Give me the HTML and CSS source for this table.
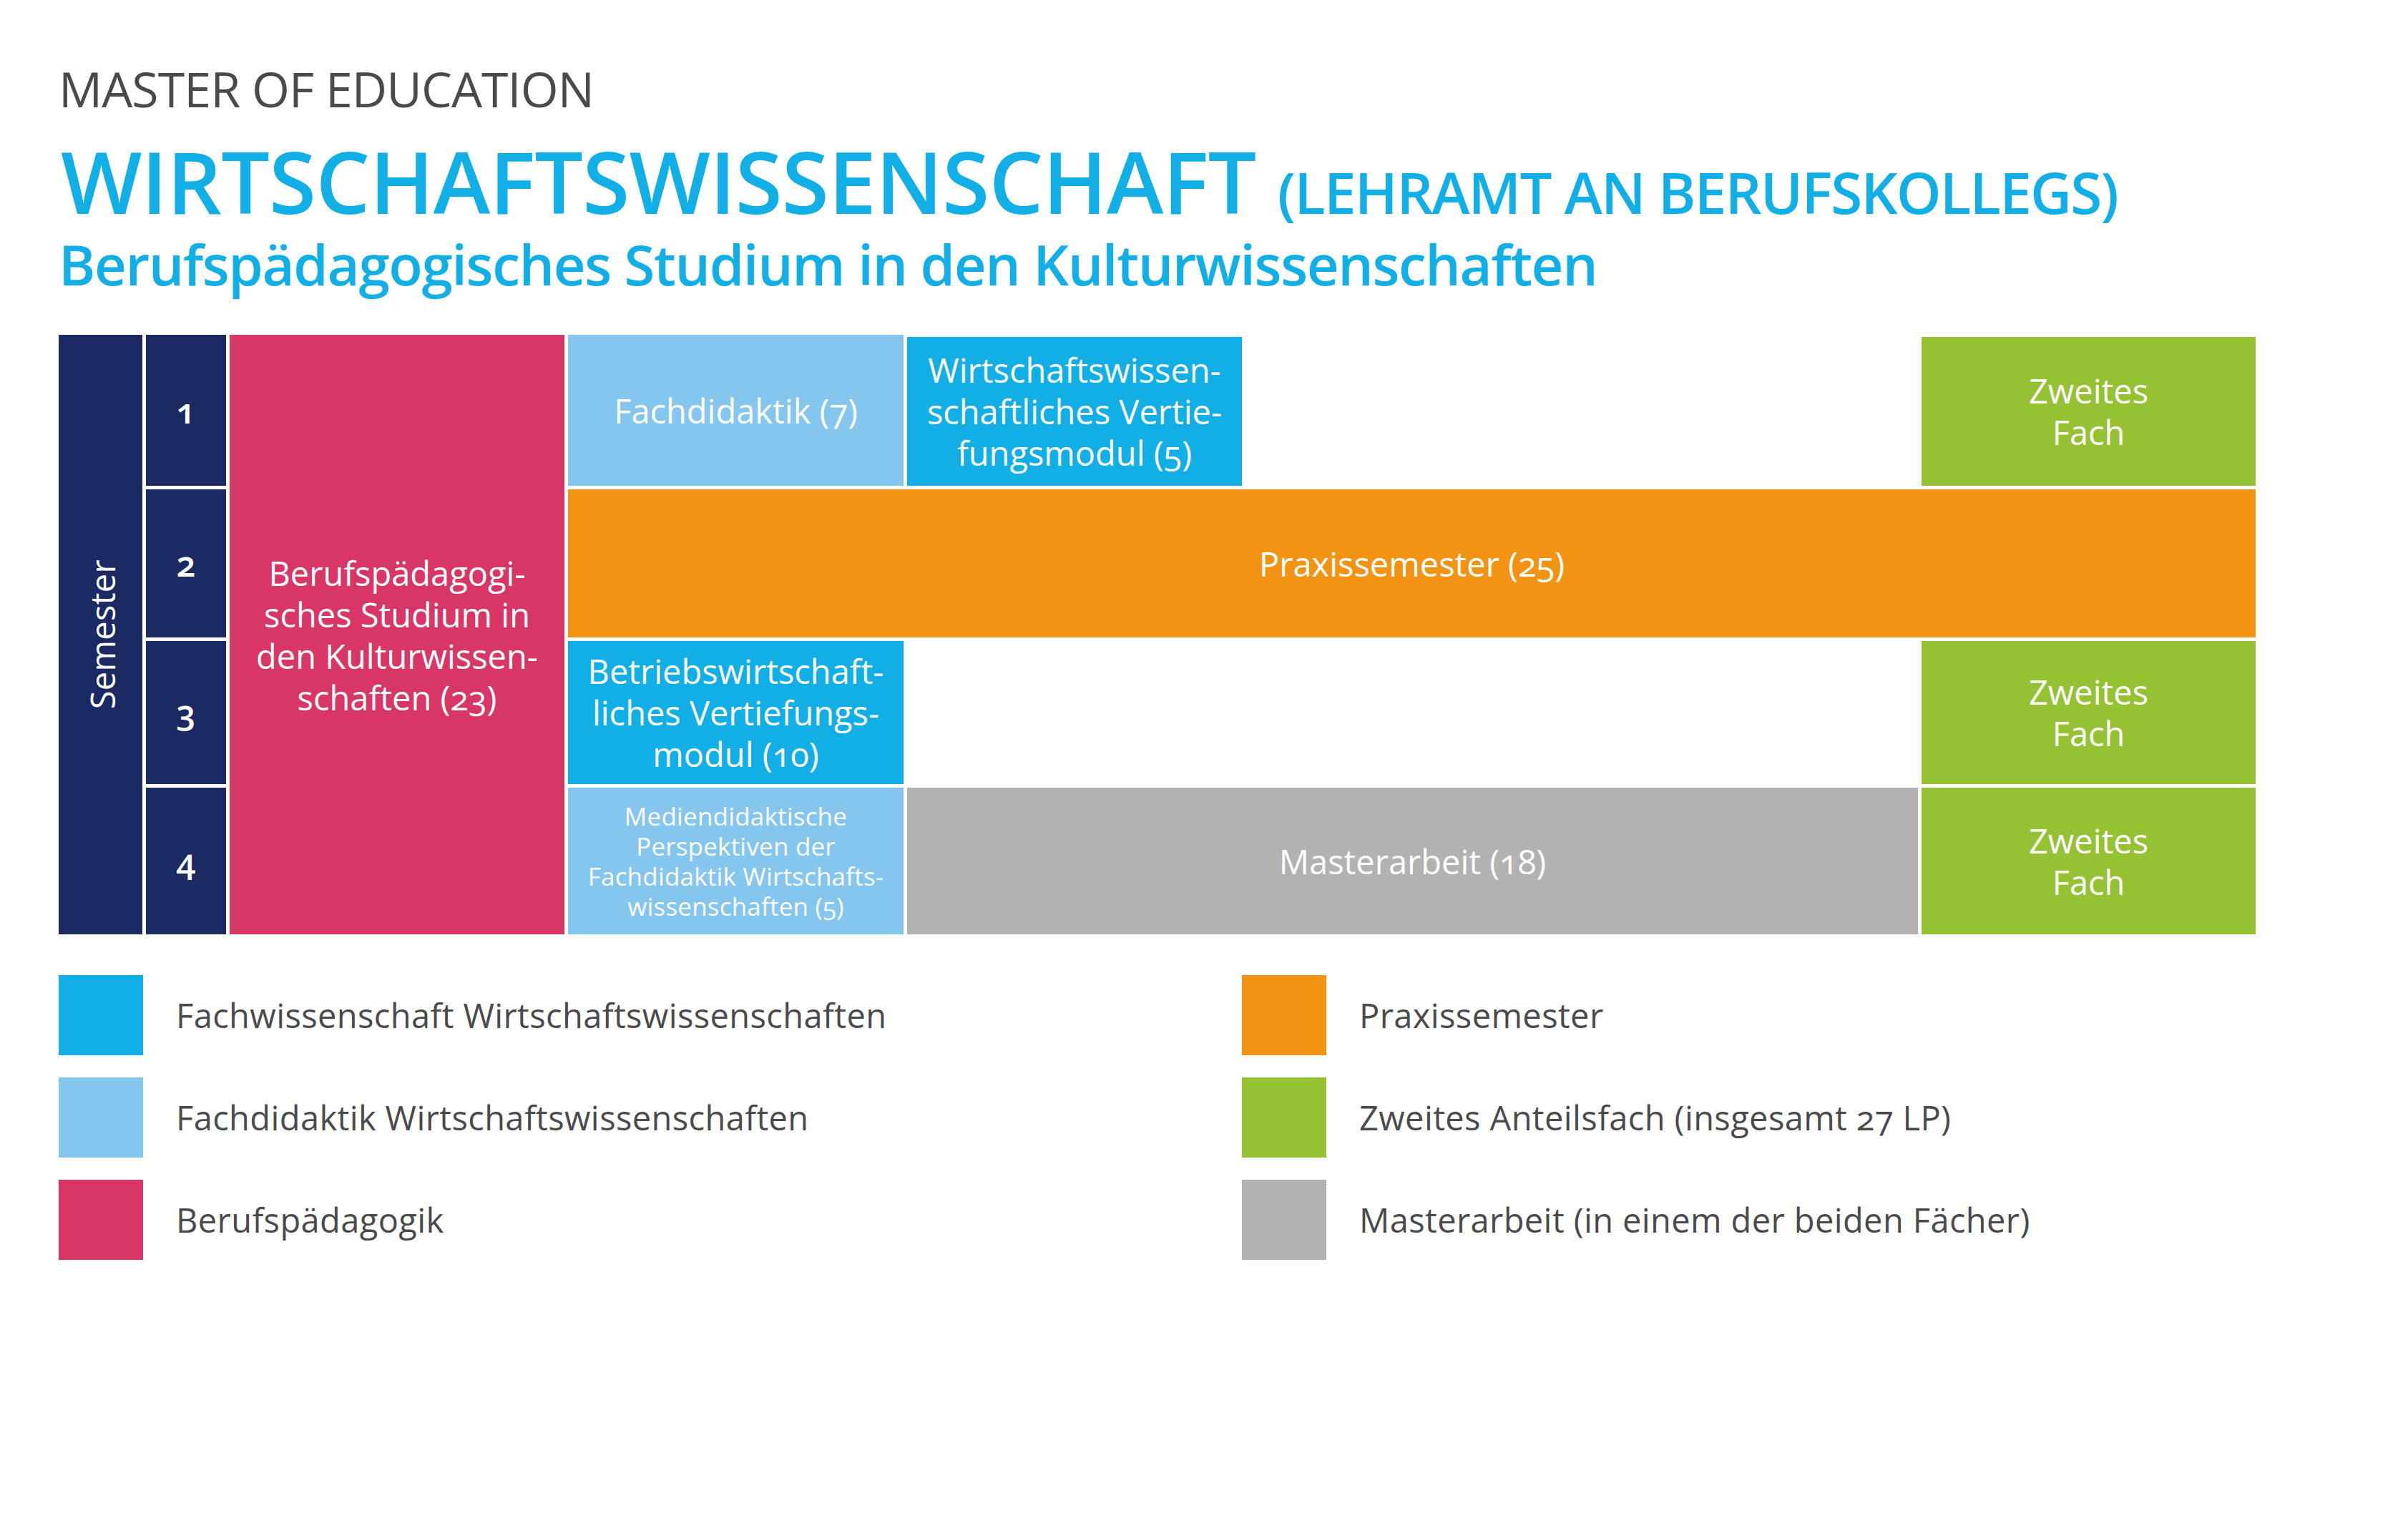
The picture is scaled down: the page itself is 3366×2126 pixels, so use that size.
FILE: index.html
```html
<!DOCTYPE html>
<html lang="de">
<head>
<meta charset="utf-8">
<title>Master of Education – Wirtschaftswissenschaft</title>
<link rel="stylesheet" href="styles.css">
</head>
<body>
<main class="page">
  <header class="head">
    <div class="kicker">MASTER OF EDUCATION</div>
    <h1 class="title">WIRTSCHAFTSWISSENSCHAFT <span class="paren">(LEHRAMT AN BERUFSKOLLEGS)</span></h1>
    <h2 class="subtitle">Berufspädagogisches Studium in den Kulturwissenschaften</h2>
  </header>

  <section class="plan">
    <div class="cell sem"><span class="sem-label">Semester</span></div>
    <div class="cell num r1">1</div>
    <div class="cell num r2">2</div>
    <div class="cell num r3">3</div>
    <div class="cell num r4">4</div>

    <div class="cell pink bp">Berufspädagogi-<br>sches Studium in<br>den Kulturwissen-<br>schaften (23)</div>

    <div class="cell light fd">Fachdidaktik (7)</div>
    <div class="cell blue wv">Wirtschaftswissen-<br>schaftliches Vertie-<br>fungsmodul (5)</div>
    <div class="cell green g1">Zweites<br>Fach</div>

    <div class="cell orange px">Praxissemester (25)</div>

    <div class="cell blue bw">Betriebswirtschaft-<br>liches Vertiefungs-<br>modul (10)</div>
    <div class="cell green g3">Zweites<br>Fach</div>

    <div class="cell light md small">Mediendidaktische<br>Perspektiven der<br>Fachdidaktik Wirtschafts-<br>wissenschaften (5)</div>
    <div class="cell gray ma">Masterarbeit (18)</div>
    <div class="cell green g4">Zweites<br>Fach</div>
  </section>

  <section class="legend">
    <div class="item"><span class="sw blue"></span><span class="lt">Fachwissenschaft Wirtschaftswissenschaften</span></div>
    <div class="item"><span class="sw orange"></span><span class="lt">Praxissemester</span></div>
    <div class="item"><span class="sw light"></span><span class="lt">Fachdidaktik Wirtschaftswissenschaften</span></div>
    <div class="item"><span class="sw green"></span><span class="lt">Zweites Anteilsfach (insgesamt 27 LP)</span></div>
    <div class="item"><span class="sw pink"></span><span class="lt">Berufspädagogik</span></div>
    <div class="item"><span class="sw gray"></span><span class="lt">Masterarbeit (in einem der beiden Fächer)</span></div>
  </section>
</main>
</body>
</html>
```
FILE: styles.css
```css
html, body {
  margin: 0;
  padding: 0;
  background: #ffffff;
}

body {
  width: 3366px;
  height: 2126px;
  overflow: hidden;
  font-family: "Open Sans", "Noto Sans", "DejaVu Sans", sans-serif;
  font-variant-numeric: oldstyle-nums;
  color: #4a4a4a;
}

.page {
  padding: 84px 0 0 82px;
}

/* ---------- header ---------- */
.kicker {
  font-size: 68px;
  line-height: 80px;
  font-weight: 500;
  letter-spacing: -0.9px;
  color: #4a4a4a;
}

.title {
  margin: 24px 0 0 0;
  padding-left: 3px;
  font-size: 120px;
  line-height: 130px;
  font-weight: 600;
  letter-spacing: -0.85px;
  color: #12afe6;
  white-space: nowrap;
}

.title .paren {
  font-size: 80px;
  line-height: 80px;
  letter-spacing: -1.8px;
}

.subtitle {
  margin: 6px 0 0 0;
  font-size: 78px;
  line-height: 90px;
  font-weight: 600;
  letter-spacing: -1.4px;
  color: #12afe6;
  white-space: nowrap;
}

/* ---------- plan grid ---------- */
.plan {
  margin-top: 54px;
  display: grid;
  grid-template-columns: 117px 112px 468px 469px 468px 940px 467px;
  grid-template-rows: 211px 207px 200px 205px;
  column-gap: 5px;
  row-gap: 5px;
  width: 3071px;
}

.cell {
  display: flex;
  align-items: center;
  justify-content: center;
  text-align: center;
  color: #ffffff;
  font-size: 47px;
  line-height: 58px;
  font-weight: 500;
  white-space: nowrap;
}

.blue   { background: #12afe6; }
.light  { background: #85c6ef; }
.pink   { background: #d73667; }
.orange { background: #f39314; }
.green  { background: #95c232; }
.gray   { background: #b2b2b2; }

.sem {
  grid-column: 1;
  grid-row: 1 / 5;
  background: #1b2a63;
}

.sem-label {
  writing-mode: vertical-rl;
  transform: rotate(180deg);
  font-weight: 400;
  font-size: 47px;
  line-height: 47px;
  letter-spacing: 0.3px;
  margin-left: 6px;
}

.num {
  grid-column: 2;
  background: #1b2a63;
  font-weight: 600;
  font-size: 48px;
}
.r1 { grid-row: 1; }
.r2 { grid-row: 2; }
.r3 { grid-row: 3; }
.r4 { grid-row: 4; }

.bp { grid-column: 3; grid-row: 1 / 5; padding-top: 2px; }
.fd { grid-column: 4; grid-row: 1; font-weight: 400; }
.wv { grid-column: 5; grid-row: 1; margin-top: 3px; }
.g1 { grid-column: 7; grid-row: 1; margin-top: 3px; }
.px { grid-column: 4 / 8; grid-row: 2; }
.bw { grid-column: 4; grid-row: 3; }
.g3 { grid-column: 7; grid-row: 3; }
.md { grid-column: 4; grid-row: 4; }
.ma { grid-column: 5 / 7; grid-row: 4; }
.g4 { grid-column: 7; grid-row: 4; }

.green { font-weight: 400; }

.small {
  font-size: 35px;
  line-height: 42px;
  letter-spacing: 0.2px;
}

/* ---------- legend ---------- */
.legend {
  margin-top: 57px;
  display: grid;
  grid-template-columns: 1654px auto;
  row-gap: 31px;
}

.item {
  display: flex;
  align-items: center;
  gap: 46px;
  height: 112px;
}

.sw {
  flex: none;
  width: 118px;
  height: 112px;
}

.lt {
  font-size: 47px;
  line-height: 58px;
  letter-spacing: 0.4px;
  color: #4a4a4a;
  white-space: nowrap;
}
```
